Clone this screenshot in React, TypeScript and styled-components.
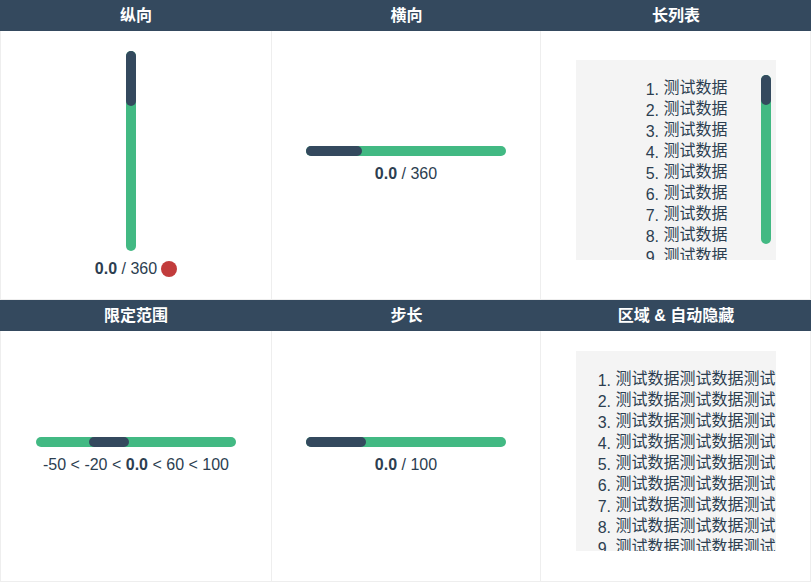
import React from 'react';
import styled, { createGlobalStyle } from 'styled-components';

const Global = createGlobalStyle`
  html, body { margin: 0; padding: 0; background: #fff; }
  body {
    font-family: "Liberation Sans", Arial, "Noto Sans CJK SC", sans-serif;
    color: #2c3e50;
    font-size: 16px;
  }
`;

const Grid = styled.div`
  display: grid;
  grid-template-columns: 272px 269px 270px;
`;

const Cell = styled.section`
  display: flex;
  flex-direction: column;
`;

const Title = styled.h3`
  margin: 0;
  height: 31px;
  line-height: 31px;
  background: #34495e;
  color: #fff;
  font-size: 16px;
  font-weight: bold;
  text-align: center;
`;

const Body = styled.div<{ $first?: boolean }>`
  flex: 1;
  display: flex;
  flex-direction: column;
  align-items: center;
  justify-content: center;
  padding: 20px 0;
  border-right: 1px solid #eee;
  border-bottom: 1px solid #eee;
  ${(p) => (p.$first ? 'border-left: 1px solid #eee;' : '')}
`;

const VTrack = styled.div`
  position: relative;
  width: 10px;
  height: 200px;
  border-radius: 5px;
  background: #42b983;
  margin-right: 11px;
`;

const VHandle = styled.div<{ $size: number }>`
  position: absolute;
  left: 0;
  top: 0;
  width: 10px;
  height: ${(p) => p.$size}px;
  border-radius: 5px;
  background: #34495e;
`;

const HTrack = styled.div`
  position: relative;
  width: 200px;
  height: 10px;
  border-radius: 5px;
  background: #42b983;
`;

const HHandle = styled.div<{ $size: number }>`
  position: absolute;
  top: 0;
  height: 10px;
  width: ${(p) => p.$size}px;
  border-radius: 5px;
  background: #34495e;
`;

const Info = styled.div`
  margin-top: 7px;
  line-height: 21px;
  display: flex;
  align-items: center;
  white-space: pre;
`;

const Dot = styled.span`
  display: inline-block;
  width: 16px;
  height: 16px;
  border-radius: 50%;
  background: #c23c3c;
  margin-left: 4px;
`;

const ListBox = styled.div`
  position: relative;
  width: 200px;
  height: 200px;
  margin-bottom: 10px;
  background: #f4f4f4;
  overflow: hidden;
`;

const List = styled.ol`
  margin: 17px 0 0;
  padding-left: 40px;
  line-height: 21px;
  text-align: center;
  list-style: none;
  counter-reset: item;
`;

const Item = styled.li`
  white-space: nowrap;
  counter-increment: item;
`;

const ItemText = styled.span`
  position: relative;
  &::before {
    content: counter(item) ". ";
    position: absolute;
    right: 100%;
    top: 0;
    white-space: pre;
  }
`;

const ScrollTrack = styled.div`
  position: absolute;
  right: 5px;
  top: 15px;
  width: 10px;
  height: 169px;
  border-radius: 5px;
  background: #42b983;
`;

const ScrollThumb = styled.div`
  width: 10px;
  height: 30px;
  border-radius: 5px;
  background: #34495e;
`;

const items = Array.from({ length: 20 }, (_, i) => i + 1);

export default function App() {
  return (
    <>
      <Global />
      <Grid>
        <Cell>
          <Title>纵向</Title>
          <Body $first>
            <VTrack>
              <VHandle $size={55} />
            </VTrack>
            <Info>
              <b>0.0</b> / 360<Dot />
            </Info>
          </Body>
        </Cell>
        <Cell>
          <Title>横向</Title>
          <Body>
            <HTrack>
              <HHandle $size={56} style={{ left: 0 }} />
            </HTrack>
            <Info>
              <b>0.0</b> / 360
            </Info>
          </Body>
        </Cell>
        <Cell>
          <Title>长列表</Title>
          <Body>
            <ListBox>
              <List>
                {items.map((n) => (
                  <Item key={n}>
                    <ItemText>测试数据</ItemText>
                  </Item>
                ))}
              </List>
              <ScrollTrack>
                <ScrollThumb />
              </ScrollTrack>
            </ListBox>
          </Body>
        </Cell>
        <Cell>
          <Title>限定范围</Title>
          <Body $first>
            <HTrack>
              <HHandle $size={40} style={{ left: 53 }} />
            </HTrack>
            <Info>
              -50 &lt; -20 &lt; <b>0.0</b> &lt; 60 &lt; 100
            </Info>
          </Body>
        </Cell>
        <Cell>
          <Title>步长</Title>
          <Body>
            <HTrack>
              <HHandle $size={60} style={{ left: 0 }} />
            </HTrack>
            <Info>
              <b>0.0</b> / 100
            </Info>
          </Body>
        </Cell>
        <Cell>
          <Title>区域 &amp; 自动隐藏</Title>
          <Body>
            <ListBox>
              <List>
                {items.map((n) => (
                  <Item key={n}>
                    <ItemText>测试数据测试数据测试数据测试数据</ItemText>
                  </Item>
                ))}
              </List>
            </ListBox>
          </Body>
        </Cell>
      </Grid>
    </>
  );
}
